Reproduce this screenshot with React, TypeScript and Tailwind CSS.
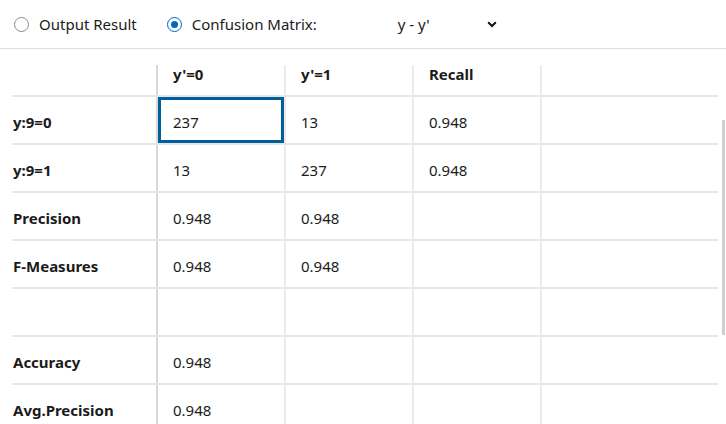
import React from "react";

const font = { fontFamily: '"Noto Sans", "Open Sans", sans-serif' };

type Row = { label: string; cells: string[]; selected?: number };

const rows: Row[] = [
  { label: "y:9=0", cells: ["237", "13", "0.948", ""], selected: 0 },
  { label: "y:9=1", cells: ["13", "237", "0.948", ""] },
  { label: "Precision", cells: ["0.948", "0.948", "", ""] },
  { label: "F-Measures", cells: ["0.948", "0.948", "", ""] },
  { label: "", cells: ["", "", "", ""] },
  { label: "Accuracy", cells: ["0.948", "", "", ""] },
  { label: "Avg.Precision", cells: ["0.948", "", "", ""] },
];

const colBorder = [
  "border-r-2 border-[#d9d9d9]",
  "border-r-2 border-[#ebebeb]",
  "border-r-2 border-[#ebebeb]",
  "border-r-2 border-[#ebebeb]",
];

export default function App() {
  return (
    <div className="relative w-[726px] h-[424px] overflow-hidden bg-white text-[#1b1b1b]" style={font}>
      <div className="h-[49px] border-b border-[#dedede] flex items-center text-[15px]">
        <div className="flex items-center pl-[14px]">
          <span className="w-[15px] h-[15px] rounded-full border-[1.5px] border-[#8c8c8c]" />
          <span className="ml-[10px]">Output Result</span>
        </div>
        <div className="flex items-center ml-[30px]">
          <span className="w-[15px] h-[15px] rounded-full border-[1.5px] border-[#0067c0] flex items-center justify-center">
            <span className="w-[7px] h-[7px] rounded-full bg-[#0067c0]" />
          </span>
          <span className="ml-[10px]">Confusion Matrix:</span>
        </div>
        <div className="flex items-center ml-[81px]">
          <span>y - y'</span>
          <svg className="ml-[57px]" width="10" height="7" viewBox="0 0 10 7">
            <path d="M1.2 1.2 L5 5 L8.8 1.2" fill="none" stroke="#111" strokeWidth="2" />
          </svg>
        </div>
      </div>

      <div className="pl-[12px] pr-[8px] pt-[16px] text-[15px]">
        <div className="grid grid-cols-[146px_128px_128px_128px_1fr] h-[32px] border-b-2 border-[#e6e6e6] font-bold leading-[18px]">
          <div className={colBorder[0]} />
          <div className={`${colBorder[1]} pl-[15px]`}>y'=0</div>
          <div className={`${colBorder[2]} pl-[15px]`}>y'=1</div>
          <div className={`${colBorder[3]} pl-[15px]`}>Recall</div>
          <div />
        </div>
        {rows.map((r, i) => (
          <div
            key={i}
            className="grid grid-cols-[146px_128px_128px_128px_1fr] h-[48px] border-b-2 border-[#e6e6e6] leading-[20px]"
          >
            <div className={`${colBorder[0]} pl-[1px] pt-[15px] font-bold`}>{r.label}</div>
            {r.cells.map((c, j) => (
              <div
                key={j}
                className={`relative pt-[15px] pl-[15px] ${j < 3 ? colBorder[j + 1] : ""}`}
              >
                {r.selected === j && (
                  <div className="absolute inset-0 border-[3px] border-[#005f9e]" />
                )}
                {c}
              </div>
            ))}
          </div>
        ))}
      </div>

      <div className="absolute right-[1px] top-[120px] w-[3px] h-[215px] bg-[#cfcfcf]" />
    </div>
  );
}
